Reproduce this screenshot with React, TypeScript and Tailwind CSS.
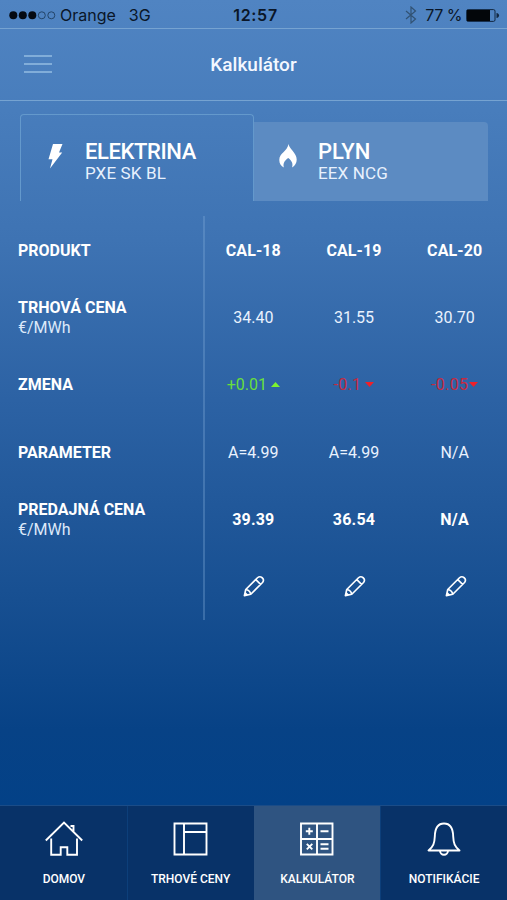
import type { ReactNode } from 'react';

interface Product {
    name: string,
    price: string,
    change: string,
    rising: boolean,
    parameter: string,
    salePrice: string
};

interface NavItem {
    title: string,
    icon: ReactNode,
    active?: boolean
};

const products: Product[] = [
    { name: "CAL-18", price: "34.40", change: "+0.01", rising: true, parameter: "A=4.99", salePrice: "39.39" },
    { name: "CAL-19", price: "31.55", change: "-0.1", rising: false, parameter: "A=4.99", salePrice: "36.54" },
    { name: "CAL-20", price: "30.70", change: "-0.05", rising: false, parameter: "N/A", salePrice: "N/A" }
];

const labels: { title: string, unit?: string }[] = [
    { title: "PRODUKT" },
    { title: "TRHOVÁ CENA", unit: "€/MWh" },
    { title: "ZMENA" },
    { title: "PARAMETER" },
    { title: "PREDAJNÁ CENA", unit: "€/MWh" }
];

const HomeIcon = () => (
    <svg className="w-10 h-10" viewBox="0 0 40 40" fill="none" stroke="currentColor" strokeWidth="1.9">
        <path d="M1.800 21.500 20 3.500l18.200 18M7.200 19.500v16.300h9.500v-7.600h6.600v7.600h9.700V19.500M26.500 7h3v6" />
    </svg>
);

const PricesIcon = () => (
    <svg className="w-10 h-10" viewBox="0 0 40 40" fill="none" stroke="currentColor" strokeWidth="1.9">
        <path d="M3.500 4.500H35.500v31H3.500zM13 4.500v31M13 13h22.500" />
    </svg>
);

const CalculatorIcon = () => (
    <svg className="w-10 h-10" viewBox="0 0 40 40" fill="none" stroke="currentColor" strokeWidth="1.9">
        <path d="M4 4.500h31.500v31H4zM20 4.500v31M4 20h31.500" />
        <path d="M8.800 12.300h7M12.300 8.800v7M23.500 12.300h8M9.800 24.800l5.500 5.500M15.300 24.800l-5.500 5.500M23.500 25.300h8M23.500 29.800h8" />
    </svg>
);

const BellIcon = () => (
    <svg className="w-10 h-10" viewBox="0 0 40 40" fill="none" stroke="currentColor" strokeWidth="1.9" strokeLinejoin="round">
        <path d="M4.500 31.500h31c-4.800-3.700-6-7-6.300-14C29 9 26 4.500 20 4.500s-9 4.500-9.200 13c-.3 7-1.500 10.300-6.300 14Z" />
        <path d="M16 31.500a4 4.200 0 0 0 8 0" />
    </svg>
);

const PencilIcon = () => (
    <svg className="w-[22px] h-[22px] relative left-px -top-px" viewBox="0 0 24 24" fill="none" stroke="currentColor" strokeWidth="1.800" strokeLinejoin="round">
        <path d="M1.500 22.500 3 15.800 15.800 3Q18.300.8 20.900 3T21.300 8.200L8.500 21ZM3 15.800Q7.500 16.500 8.500 21M14 5l5.200 5.200M2.300 19.500l2.400 2.400" />
    </svg>
);

const BoltIcon = () => (
    <svg className="w-[15px] h-[25px] mb-[10px]" viewBox="0 0 15 25" fill="currentColor">
        <path d="M5 0h9.500L11 8.500h3.200L2 24.500l2.500-9.300H.5Z" />
    </svg>
);

const FlameIcon = () => (
    <svg className="w-[18px] h-6 mb-[11px]" viewBox="0 0 18 24" fill="currentColor">
        <path d="M9.500 0c.6 4.800 8.200 8.800 8.200 15.500 0 3.500-1.500 6.200-4.700 7.900 1.200-3.300.2-6.500-3.800-9.400C5.200 16.800 3.700 20 5 23.400 1.900 22 .3 19.500.3 16 .3 9 8.300 7.500 9.500 0Z" />
    </svg>
);

function StatusBar() {
    return(
        <div className="h-7 pl-[9px] pr-[7px] grid grid-cols-[1fr_auto_1fr] items-center text-[16px] text-[#0a1628] font-['Inter',sans-serif]">
            <div className="flex items-center pt-[2px]">
                <svg className="w-[47px] h-[9px]" viewBox="0 0 47 9">
                    <g fill="#050a12">
                        <circle cx="4.300" cy="4.300" r="4" />
                        <circle cx="13.800" cy="4.300" r="4" />
                        <circle cx="23.300" cy="4.300" r="4" />
                    </g>
                    <g fill="none" stroke="#234569">
                        <circle cx="32.800" cy="4.300" r="3.500" />
                        <circle cx="42.300" cy="4.300" r="3.500" />
                    </g>
                </svg>
                <span className="ml-1">Orange</span>
                <span className="ml-[13px]">3G</span>
            </div>
            <span className="pt-[2px] pl-[2px] font-semibold tracking-[0.700px]">12:57</span>
            <div className="flex items-center justify-end pt-[2px]">
                <svg className="w-3 h-[18px] mr-2" viewBox="0 0 12 18" fill="none" stroke="#315273" strokeWidth="1.200">
                    <path d="m1 5 9.500 8L6 17V1l4.500 4L1 13" />
                </svg>
                <span className="mr-1 tracking-[-0.500px]">77 %</span>
                <svg className="w-[34px] h-[13px]" viewBox="0 0 34 13">
                    <rect x=".6" y=".6" width="28.400" height="11.800" rx="1.500" fill="none" stroke="#122842" />
                    <rect x="1" y="1" width="23" height="11" fill="#03060a" />
                    <path d="M30.500 4c3.500.5 3.500 4.500 0 5Z" fill="#122842" />
                </svg>
            </div>
        </div>
    );
};

function Header() {
    return(
        <header className="h-[73px] border-y border-[#76a3d1] grid grid-cols-[1fr_auto_1fr] items-center px-6">
            <button className="w-7 flex flex-col gap-[6px] relative -top-px" aria-label="Menu">
                <span className="h-[2px] bg-[#81add9]" />
                <span className="h-[2px] bg-[#81add9]" />
                <span className="h-[2px] bg-[#81add9]" />
            </button>
            <h1 className="pt-[2px] text-[19px] font-medium text-[#f4f8ff]">Kalkulátor</h1>
        </header>
    );
};

function Tabs() {
    return(
        <div className="pl-5 pr-[19px] pt-[13px] flex items-end">
            <button className="w-[234px] h-[87px] flex items-center pl-[27px] pt-[7px] text-left border border-b-0 border-[#6499cc] rounded-t-[4px]">
                <BoltIcon />
                <TabText title="ELEKTRINA" subtitle="PXE SK BL" className="ml-[22px] tracking-[-0.400px]" />
            </button>
            <button className="flex-1 h-[79px] flex items-center pl-[25px] text-left bg-[#5c8bc2] rounded-tr-[4px]">
                <FlameIcon />
                <TabText title="PLYN" subtitle="EEX NCG" className="ml-[21px]" />
            </button>
        </div>
    );
};

function TabText({ title, subtitle, className }: { title: string, subtitle: string, className: string }) {
    return(
        <div className={className}>
            <p className="text-[22px] leading-[23px] font-medium">{title}</p>
            <p className="text-[17px] leading-[20px] tracking-[0.150px] text-[#e8f1fd]">{subtitle}</p>
        </div>
    );
};

function PriceTable() {

    const renderChange = (product: Product) => (
        <span className={`flex items-center ${product.change.length > 4 && !product.rising ? "gap-px" : "gap-1"} ${product.rising ? "text-[#68df3c]" : "text-[#c62a3f] tracking-[0.300px]"}`}>
            {product.change}
            <svg className="w-[9px] h-[5px] relative -top-px" viewBox="0 0 9 5" fill={product.rising ? "#7cf42e" : "#ef2029"}>
                <path d={product.rising ? "M4.500 0 9 5H0Z" : "M0 0h9L4.500 5Z"} />
            </svg>
        </span>
    );

    return(
        <div className="mt-[15px] h-[404px] flex text-[16px]">
            <div className="w-[203px] pl-[18px] pt-px -mb-px grid grid-rows-6">
                {labels.map((label) => (
                    <div key={label.title} className="flex flex-col justify-center leading-5">
                        <p className="font-bold">{label.title}</p>
                        {label.unit && <p className="text-[#dce9fa]">{label.unit}</p>}
                    </div>
                ))}
            </div>
            <div className="w-[302px] grid grid-cols-3 shadow-[inset_2px_0_0_rgba(125,170,215,0.35)]">
                {products.map((product) => (
                    <div key={product.name} className="pt-px -mb-px grid grid-rows-6 items-center justify-items-center">
                        <span className="font-bold tracking-[0.100px]">{product.name}</span>
                        <span className="text-[#eaf2fe]">{product.price}</span>
                        {renderChange(product)}
                        <span className="text-[#eaf2fe]">{product.parameter}</span>
                        <span className="font-bold tracking-[0.200px]">{product.salePrice}</span>
                        <PencilIcon />
                    </div>
                ))}
            </div>
        </div>
    );
};

function BottomNav() {

    const items: NavItem[] = [
        { title: "DOMOV", icon: <HomeIcon /> },
        { title: "TRHOVÉ CENY", icon: <PricesIcon /> },
        { title: "KALKULÁTOR", icon: <CalculatorIcon />, active: true },
        { title: "NOTIFIKÁCIE", icon: <BellIcon /> }
    ];

    return(
        <nav className="mt-auto h-[95px] grid grid-cols-4 bg-[#083268] border-t border-[#1b4c87]">
            {items.map((item) => (
                <button
                    key={item.title}
                    className={`flex flex-col items-center pt-[13px] border-l first:border-transparent ${item.active ? "bg-[#2f5481] border-[#2f5481]" : "border-[#0d3f7a]"}`}
                >
                    {item.icon}
                    <span className="mt-[12px] text-[12px] leading-4 font-medium whitespace-nowrap">{item.title}</span>
                </button>
            ))}
        </nav>
    );
};

export default function App() {
    return(
        <div className="w-[507px] h-[900px] flex flex-col overflow-hidden text-white font-['Roboto',sans-serif] bg-[linear-gradient(to_bottom,#5084c2_0px,#487dbc_110px,#3e73b3_240px,#2c62a4_400px,#174f91_600px,#074286_730px,#034187_805px)]">
            <StatusBar />
            <Header />
            <Tabs />
            <PriceTable />
            <BottomNav />
        </div>
    );
};
